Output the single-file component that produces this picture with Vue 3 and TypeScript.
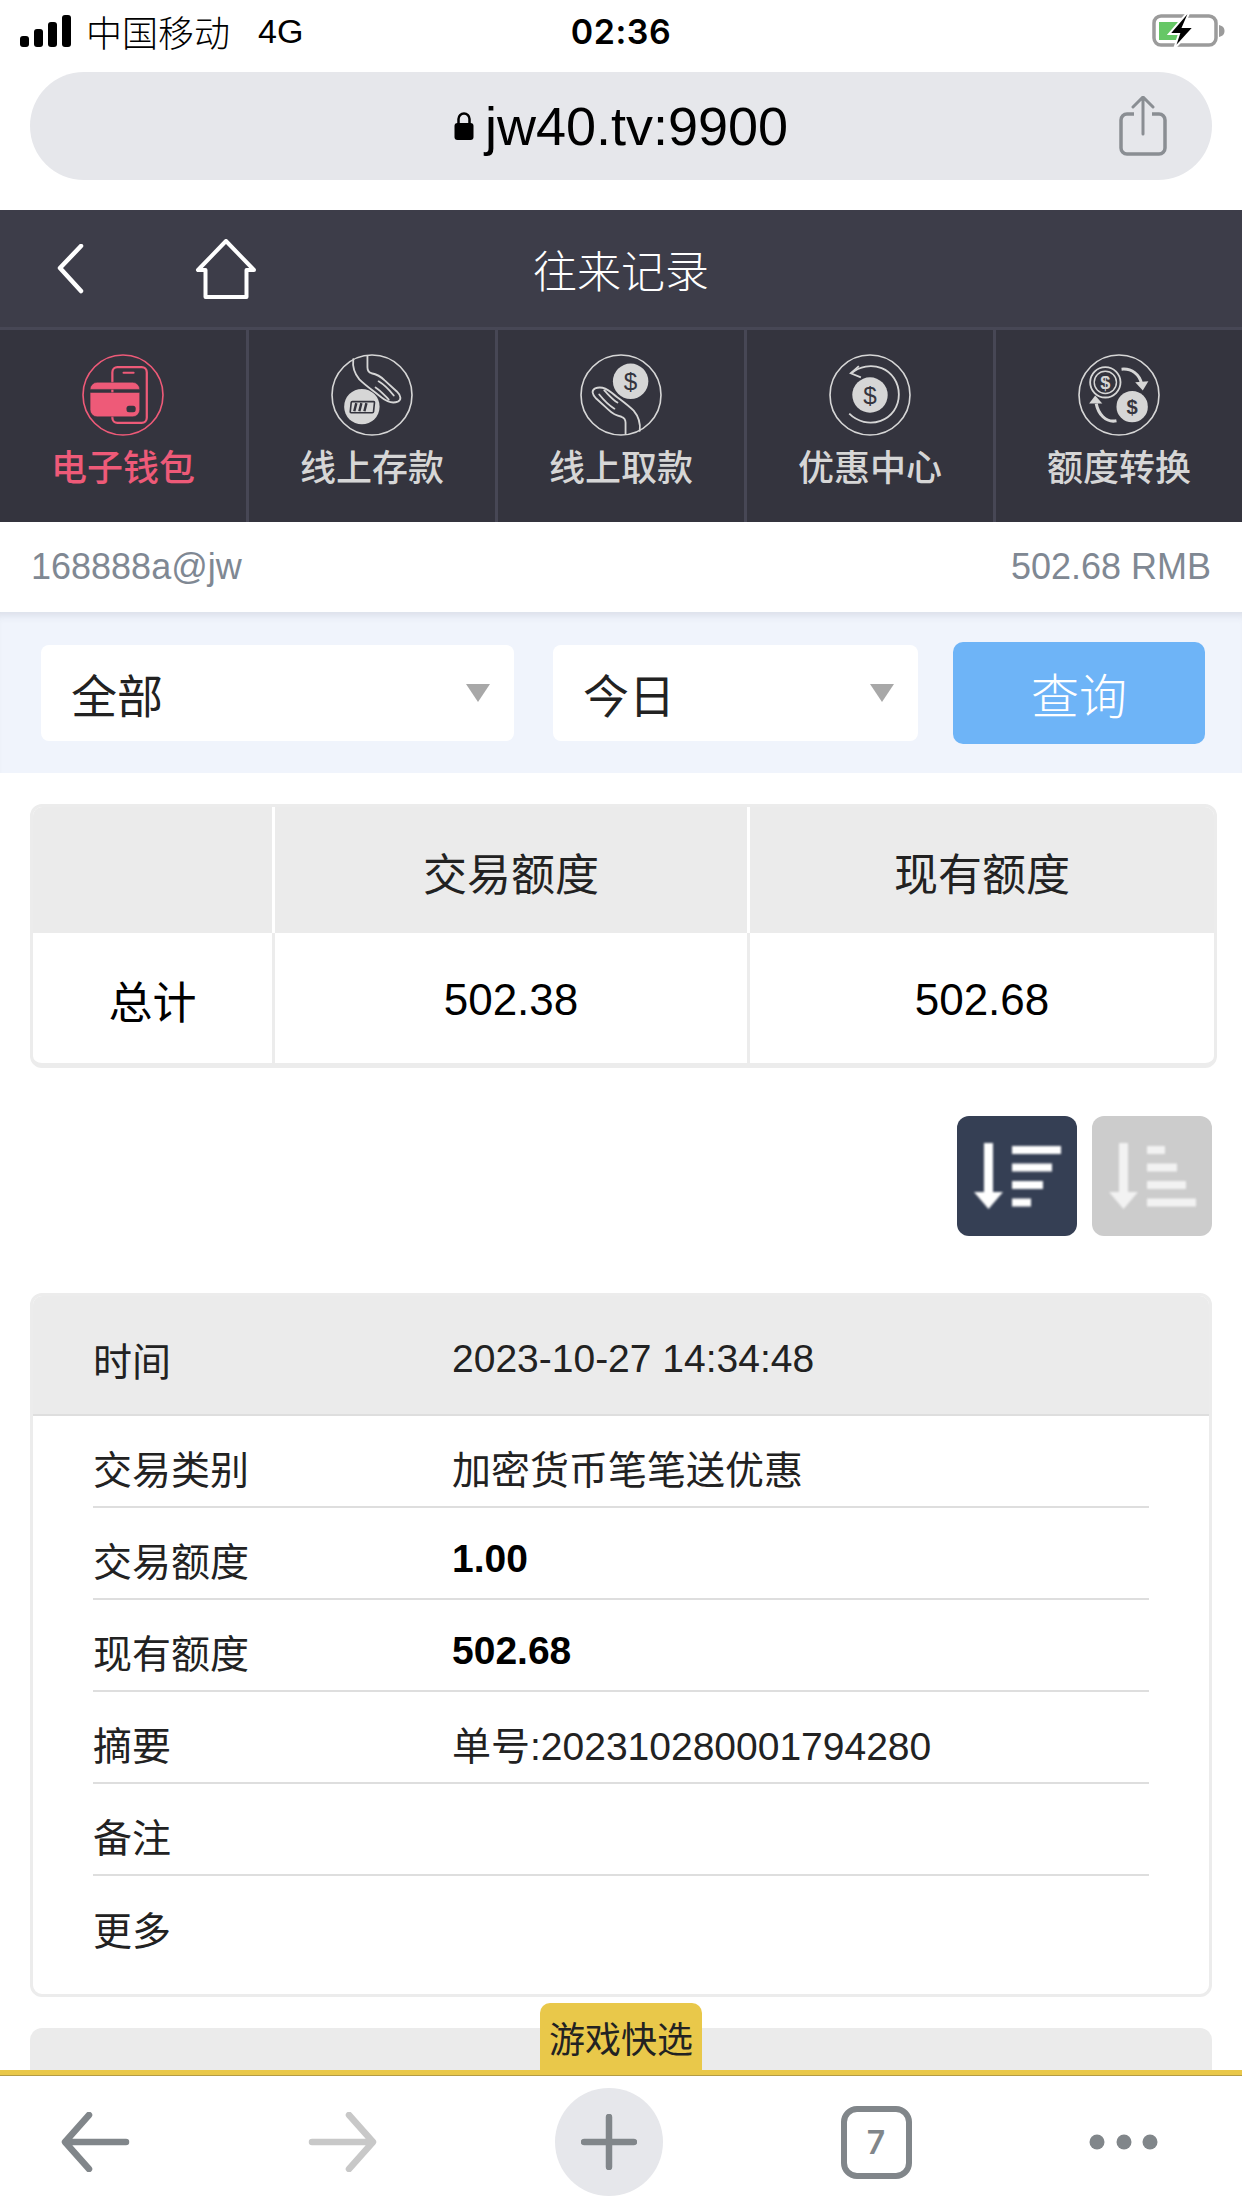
<script setup lang="ts">
const tabs = [
  { key: 'wallet', label: '电子钱包' },
  { key: 'deposit', label: '线上存款' },
  { key: 'withdraw', label: '线上取款' },
  { key: 'promo', label: '优惠中心' },
  { key: 'exchange', label: '额度转换' },
]

const rows = [
  { label: '交易类别', value: '加密货币笔笔送优惠', bold: false },
  { label: '交易额度', value: '1.00', bold: true },
  { label: '现有额度', value: '502.68', bold: true },
  { label: '摘要', value: '单号:20231028000179428​0', bold: false },
  { label: '备注', value: '', bold: false },
  { label: '更多', value: '', bold: false },
]

const descBars = [49, 40, 31, 19]
const ascBars = [18, 30, 39, 49]
</script>

<template>
  <div class="page">
    <div class="status">
      <svg class="signal" width="52" height="32" viewBox="0 0 52 32">
        <rect x="0" y="21" width="9" height="11" rx="3" />
        <rect x="14" y="14" width="9" height="18" rx="3" />
        <rect x="28" y="7" width="9" height="25" rx="3" />
        <rect x="42" y="0" width="9" height="32" rx="3" />
      </svg>
      <span class="carrier">中国移动</span>
      <span class="net">4G</span>
      <span class="time">02:36</span>
      <svg class="battery" width="74" height="36" viewBox="0 0 74 36">
        <rect x="2" y="3" width="62" height="29" rx="7" fill="none" stroke="#9b9b9b" stroke-width="3.5" />
        <path d="M67 12c4 1 5.500 3 5.500 6s-1.500 5-5.500 6z" fill="#9b9b9b" />
        <path d="M7 9h21v18H7z" fill="#66c766" />
        <path d="M35 0 17 21h10l-5 15 20-22H31l6-14z" fill="#000" stroke="#fff" stroke-width="2" />
      </svg>
    </div>

    <div class="url-bar">
      <div class="url">
        <svg width="20" height="30" viewBox="0 0 20 30">
          <path d="M4.500 13V8a5.500 5.500 0 0 1 11 0v5" fill="none" stroke="#000" stroke-width="2.500" />
          <rect x="0.500" y="12" width="19" height="17" rx="3" />
        </svg>
        <span>jw40.tv:9900</span>
      </div>
      <svg class="share" width="48" height="60" viewBox="0 0 48 60">
        <path d="M15 18H8a6 6 0 0 0-6 6v28a6 6 0 0 0 6 6h32a6 6 0 0 0 6-6V24a6 6 0 0 0-6-6h-7" fill="none" stroke="#8a8e93" stroke-width="3.500" />
        <path d="M24 38V2M14 11l10-10 10 10" fill="none" stroke="#8a8e93" stroke-width="3" stroke-linecap="round" />
      </svg>
    </div>

    <div class="topbar">
      <div class="topbar-left">
        <svg width="28" height="50" viewBox="0 0 28 50">
          <path d="M25 2 4 24l21 23" fill="none" stroke="#fff" stroke-width="4.500" stroke-linecap="round" stroke-linejoin="round" />
        </svg>
        <svg width="62" height="60" viewBox="0 0 62 60">
          <path d="M31 2 3 31h7.500v27h41V31H59z" fill="none" stroke="#fff" stroke-width="4" stroke-linejoin="round" />
        </svg>
      </div>
      <div class="title">往来记录</div>
    </div>

    <div class="tabs">
      <div v-for="(tab, i) in tabs" :key="tab.key" class="tab" :class="{ active: i === 0 }">
        <svg class="tab-icon" width="82" height="82" viewBox="0 0 81 81">
          <circle cx="40.500" cy="40.500" r="39.500" fill="none" stroke="currentColor" stroke-width="1.600" />
          <template v-if="tab.key === 'wallet'">
            <rect x="30" y="13" width="34" height="55" rx="5" fill="none" stroke="currentColor" stroke-width="2.200" />
            <path d="M41 18.500h10" stroke="currentColor" stroke-width="2" stroke-linecap="round" />
            <path d="M8 35a7 7 0 0 1 7-7h35a7 7 0 0 1 7 7zM8 38h49v17a7 7 0 0 1-7 7H15a7 7 0 0 1-7-7z" fill="currentColor" stroke="#34343e" stroke-width="0.500" />
            <rect x="44" y="51" width="9" height="6.500" rx="2.500" fill="#34343e" />
          </template>
          <template v-else-if="tab.key === 'deposit' || tab.key === 'withdraw'">
            <g :transform="tab.key === 'withdraw' ? 'rotate(180 40.500 40.500)' : undefined" fill="none" stroke="currentColor" stroke-width="1.800" stroke-linejoin="round" stroke-linecap="round">
              <path d="M22 5c-1 8 1 14 6 20 7 7 15 12 22 18 5 4 11 6 16 4 4-2 3-6-1-10L53 26c-4-4-8-6-13-7-3-1-4-3-4-6V2" />
              <path d="M47 27c5 3 11 9 15 14M44 33c5 3 9 8 13 12" />
            </g>
            <template v-if="tab.key === 'deposit'">
              <circle cx="30.500" cy="52" r="17.500" fill="currentColor" />
              <rect x="19" y="47" width="23" height="11" rx="1" fill="none" stroke="#34343e" stroke-width="1.600" transform="skewX(-6) translate(6 0)" />
              <path d="M25 48.500 23 56.500M30 48.500 28 56.500M35 48.500 33 56.500" stroke="#34343e" stroke-width="2.400" />
            </template>
            <template v-else>
              <circle cx="50" cy="27" r="17.500" fill="currentColor" />
              <text x="50" y="35.500" class="coin-sign" font-size="24" fill="#34343e">$</text>
            </template>
          </template>
          <template v-else-if="tab.key === 'promo'">
            <path d="M22 19C30 12 42 10 52 14c10 4 17 14 17 26 0 12-7 22-18 26-11 4-23 1-31-7" fill="none" stroke="currentColor" stroke-width="1.800" />
            <path d="M29.500 12 21.500 19l10 4" fill="none" stroke="currentColor" stroke-width="1.800" />
            <circle cx="40.500" cy="40.500" r="17.500" fill="currentColor" />
            <text x="40.500" y="49" class="coin-sign" font-size="24" fill="#34343e">$</text>
          </template>
          <template v-else>
            <circle cx="27" cy="28" r="15" fill="none" stroke="currentColor" stroke-width="1.800" />
            <circle cx="27" cy="28" r="11" fill="none" stroke="currentColor" stroke-width="1.400" />
            <text x="27" y="34.500" class="coin-sign bold" font-size="18" fill="currentColor">$</text>
            <circle cx="53.500" cy="52" r="15.500" fill="currentColor" />
            <text x="53.500" y="59" class="coin-sign bold" font-size="20" fill="#34343e">$</text>
            <path d="M43 15c10-1 18 5 20 15" fill="none" stroke="currentColor" stroke-width="3" />
            <path d="M56.500 28 64 36 69.500 27z" fill="currentColor" />
            <path d="M38 66c-11 2-18-7-20-17" fill="none" stroke="currentColor" stroke-width="3" />
            <path d="M11 49 17 41 24 49z" fill="currentColor" />
          </template>
        </svg>
        <span class="tab-label">{{ tab.label }}</span>
      </div>
    </div>

    <div class="user-row">
      <span>168888a@jw</span>
      <span>502.68 RMB</span>
    </div>

    <div class="filters">
      <div class="select first"><span>全部</span><i class="caret"></i></div>
      <div class="select second"><span>今日</span><i class="caret"></i></div>
      <div class="query">查询</div>
    </div>

    <div class="content">
      <div class="summary">
        <div class="cell head"></div>
        <div class="cell head">交易额度</div>
        <div class="cell head">现有额度</div>
        <div class="cell">总计</div>
        <div class="cell">502.38</div>
        <div class="cell">502.68</div>
      </div>

      <div class="sort">
        <div class="sort-btn desc">
          <svg width="120" height="120" viewBox="0 0 120 120">
            <path d="M27 27h9v49h10L31.500 93 17 76h10z" />
            <rect v-for="(w, i) in descBars" :key="i" x="55" :y="30 + i * 17.500" :width="w" height="8" />
          </svg>
        </div>
        <div class="sort-btn asc">
          <svg width="120" height="120" viewBox="0 0 120 120">
            <path d="M27 27h9v49h10L31.500 93 17 76h10z" />
            <rect v-for="(w, i) in ascBars" :key="i" x="55" :y="30 + i * 17.500" :width="w" height="8" />
          </svg>
        </div>
      </div>

      <div class="record">
        <div class="record-head">
          <span class="rec-label">时间</span>
          <span>2023-10-27 14:34:48</span>
        </div>
        <div class="record-body">
          <div v-for="row in rows" :key="row.label" class="rec-row">
            <span class="rec-label">{{ row.label }}</span>
            <span :class="{ strong: row.bold }">{{ row.value }}</span>
          </div>
        </div>
      </div>

      <div class="record-next"></div>
    </div>

    <div class="dock">
      <div class="quick">游戏快选</div>
      <div class="dock-line"></div>
      <div class="nav">
        <svg width="70" height="60" viewBox="0 0 70 60">
          <path d="M29 3 5 30l24 27M6 30h60" fill="none" stroke="#81868a" stroke-width="6.500" stroke-linecap="round" stroke-linejoin="round" />
        </svg>
        <svg width="70" height="60" viewBox="0 0 70 60">
          <path d="M41 3l24 27-24 27M64 30H4" fill="none" stroke="#c8c8c8" stroke-width="6.500" stroke-linecap="round" stroke-linejoin="round" />
        </svg>
        <div class="plus">
          <svg width="56" height="56" viewBox="0 0 56 56">
            <path d="M28 3v50M3 28h50" stroke="#81868a" stroke-width="6.500" stroke-linecap="round" />
          </svg>
        </div>
        <div class="count">7</div>
        <svg width="70" height="20" viewBox="0 0 70 20">
          <circle cx="8" cy="10" r="7.500" fill="#81868a" />
          <circle cx="35" cy="10" r="7.500" fill="#81868a" />
          <circle cx="61" cy="10" r="7.500" fill="#81868a" />
        </svg>
      </div>
    </div>
  </div>
</template>

<style>
html,
body {
  margin: 0;
  background: #fff;
}
</style>

<style scoped>
.page {
  width: 1242px;
  height: 2208px;
  overflow: hidden;
  display: flex;
  flex-direction: column;
  background: #fff;
  color: #000;
  font-family: 'Liberation Sans', 'Noto Sans CJK SC', sans-serif;
}

/* status bar */
.status {
  height: 62px;
  flex: none;
  display: flex;
  align-items: center;
  padding: 0 16px 0 20px;
  position: relative;
  font-size: 34px;
}
.signal {
  fill: #000;
  margin-right: 14px;
}
.carrier {
  font-size: 36px;
  font-weight: 300;
}
.net {
  margin-left: 28px;
  font-size: 34px;
}
.time {
  position: absolute;
  left: 0;
  right: 0;
  text-align: center;
  font-family: Inter, 'Liberation Sans', sans-serif;
  font-weight: 600;
  font-size: 34px;
  letter-spacing: 0.5px;
}
.battery {
  margin-left: auto;
}

/* browser url bar */
.url-bar {
  height: 108px;
  flex: none;
  margin: 10px 30px 30px;
  border-radius: 54px;
  background: #e6e7eb;
  display: flex;
  align-items: center;
  justify-content: center;
  position: relative;
}
.url {
  display: flex;
  align-items: center;
  gap: 11px;
  font-size: 54px;
  font-weight: 400;
}
.share {
  position: absolute;
  right: 45px;
  top: 24px;
}

/* site header */
.topbar {
  height: 117px;
  flex: none;
  background: #3d3d49;
  border-bottom: 3px solid #474755;
  display: flex;
  align-items: center;
  position: relative;
  color: #fff;
}
.topbar-left {
  display: flex;
  align-items: center;
  gap: 111px;
  padding-left: 56px;
}
.title {
  position: absolute;
  left: 0;
  right: 0;
  text-align: center;
  font-size: 44px;
  font-weight: 300;
}

.tabs {
  height: 192px;
  flex: none;
  display: flex;
  background: #34343e;
}
.tab {
  flex: 1;
  display: flex;
  flex-direction: column;
  align-items: center;
  padding-top: 24px;
  gap: 13px;
  color: #d6d6d6;
  border-left: 3px solid #474755;
}
.tab:first-child {
  border-left: none;
}
.tab.active {
  color: #ee5a78;
}
.tab-label {
  font-size: 36px;
  line-height: 40px;
  font-weight: 500;
}
.coin-sign {
  text-anchor: middle;
  font-family: 'Liberation Sans', sans-serif;
}
.coin-sign.bold {
  font-weight: 700;
}

.user-row {
  height: 90px;
  flex: none;
  display: flex;
  align-items: center;
  justify-content: space-between;
  padding: 0 31px;
  font-size: 36px;
  color: #7f8893;
}

.filters {
  height: 161px;
  flex: none;
  display: flex;
  align-items: center;
  padding-left: 41px;
  background: #f0f4fc;
  box-shadow: inset 0 9px 8px -6px rgba(60, 70, 90, 0.13);
}
.select {
  height: 96px;
  border-radius: 8px;
  background: #fff;
  display: flex;
  align-items: center;
  justify-content: space-between;
  box-sizing: border-box;
  font-size: 46px;
  color: #222;
  padding-right: 24px;
}
.select.first {
  width: 473px;
  padding-left: 30px;
  margin-right: 39px;
}
.select.second {
  width: 365px;
  padding-left: 30px;
  margin-right: 35px;
}
.caret {
  width: 0;
  height: 0;
  border-left: 12px solid transparent;
  border-right: 12px solid transparent;
  border-top: 18px solid #a8a8a8;
}
.query {
  width: 252px;
  height: 102px;
  border-radius: 10px;
  background: #6eb4f7;
  color: #fff;
  font-size: 48px;
  font-weight: 300;
  display: flex;
  align-items: center;
  justify-content: center;
}

.content {
  flex: 1;
  min-height: 0;
  overflow: hidden;
  padding: 31px 30px 0;
  color: #222;
}

.summary {
  width: 1187px;
  height: 264px;
  box-sizing: border-box;
  display: grid;
  grid-template-columns: 239px 475px 1fr;
  grid-template-rows: 126px 1fr;
  border: 3px solid #ececec;
  border-bottom-width: 5px;
  border-radius: 12px;
  overflow: hidden;
  font-size: 44px;
  color: #000;
}
.cell {
  display: flex;
  align-items: center;
  justify-content: center;
  padding-top: 3px;
  box-sizing: border-box;
}
.cell:nth-child(3n + 2),
.cell:nth-child(3n) {
  border-left: 3px solid #ececec;
}
.cell.head {
  background: #ebebeb;
  border-left-color: #fff;
  color: #222;
}

.sort {
  display: flex;
  justify-content: flex-end;
  gap: 15px;
  margin-top: 48px;
  margin-bottom: 57px;
}
.sort-btn {
  width: 120px;
  height: 120px;
  border-radius: 12px;
  overflow: hidden;
}
.sort-btn svg {
  display: block;
  fill: #fff;
  filter: blur(0.8px);
}
.sort-btn.desc {
  background: #353f54;
}
.sort-btn.asc {
  background: #cccccc;
}
.sort-btn.asc svg {
  fill: #f2f2f2;
}

.record {
  height: 704px;
  box-sizing: border-box;
  border: 3px solid #ececec;
  border-radius: 12px;
  overflow: hidden;
  font-size: 39px;
  color: #222;
}
.record-head {
  height: 120px;
  box-sizing: border-box;
  background: #ebebeb;
  border-bottom: 2px solid #dedede;
  display: flex;
  align-items: center;
  padding-left: 60px;
  padding-top: 8px;
}
.rec-label {
  width: 359px;
  flex: none;
}
.record-body {
  padding: 0 60px;
}
.rec-row {
  height: 92px;
  box-sizing: border-box;
  display: flex;
  align-items: center;
  padding-top: 12px;
  border-bottom: 2px solid #dedede;
}
.rec-row:last-child {
  border-bottom: none;
}
.strong {
  font-weight: 700;
  color: #000;
}
.record-next {
  height: 60px;
  margin-top: 31px;
  background: #ebebeb;
  border-radius: 12px 12px 0 0;
}

/* browser bottom bar */
.dock {
  flex: none;
  position: relative;
}
.quick {
  position: absolute;
  left: 540px;
  bottom: 100%;
  width: 162px;
  height: 67px;
  background: #e9c84a;
  border-radius: 10px 10px 0 0;
  display: flex;
  align-items: center;
  justify-content: center;
  font-size: 36px;
  color: #222;
}
.dock-line {
  height: 5px;
  background: #e9c84a;
  border-bottom: 1px solid #b39c45;
}
.nav {
  height: 132px;
  background: #fff;
  display: flex;
  align-items: center;
  justify-content: space-between;
  padding: 0 83px 0 60px;
}
.plus {
  width: 108px;
  height: 108px;
  border-radius: 50%;
  background: #e6e7eb;
  display: flex;
  align-items: center;
  justify-content: center;
}
.count {
  width: 71px;
  height: 73px;
  box-sizing: border-box;
  border: 6px solid #81868a;
  border-radius: 16px;
  display: flex;
  align-items: center;
  justify-content: center;
  font-family: Inter, 'Liberation Sans', sans-serif;
  font-size: 32px;
  font-weight: 600;
  color: #81868a;
}
</style>
